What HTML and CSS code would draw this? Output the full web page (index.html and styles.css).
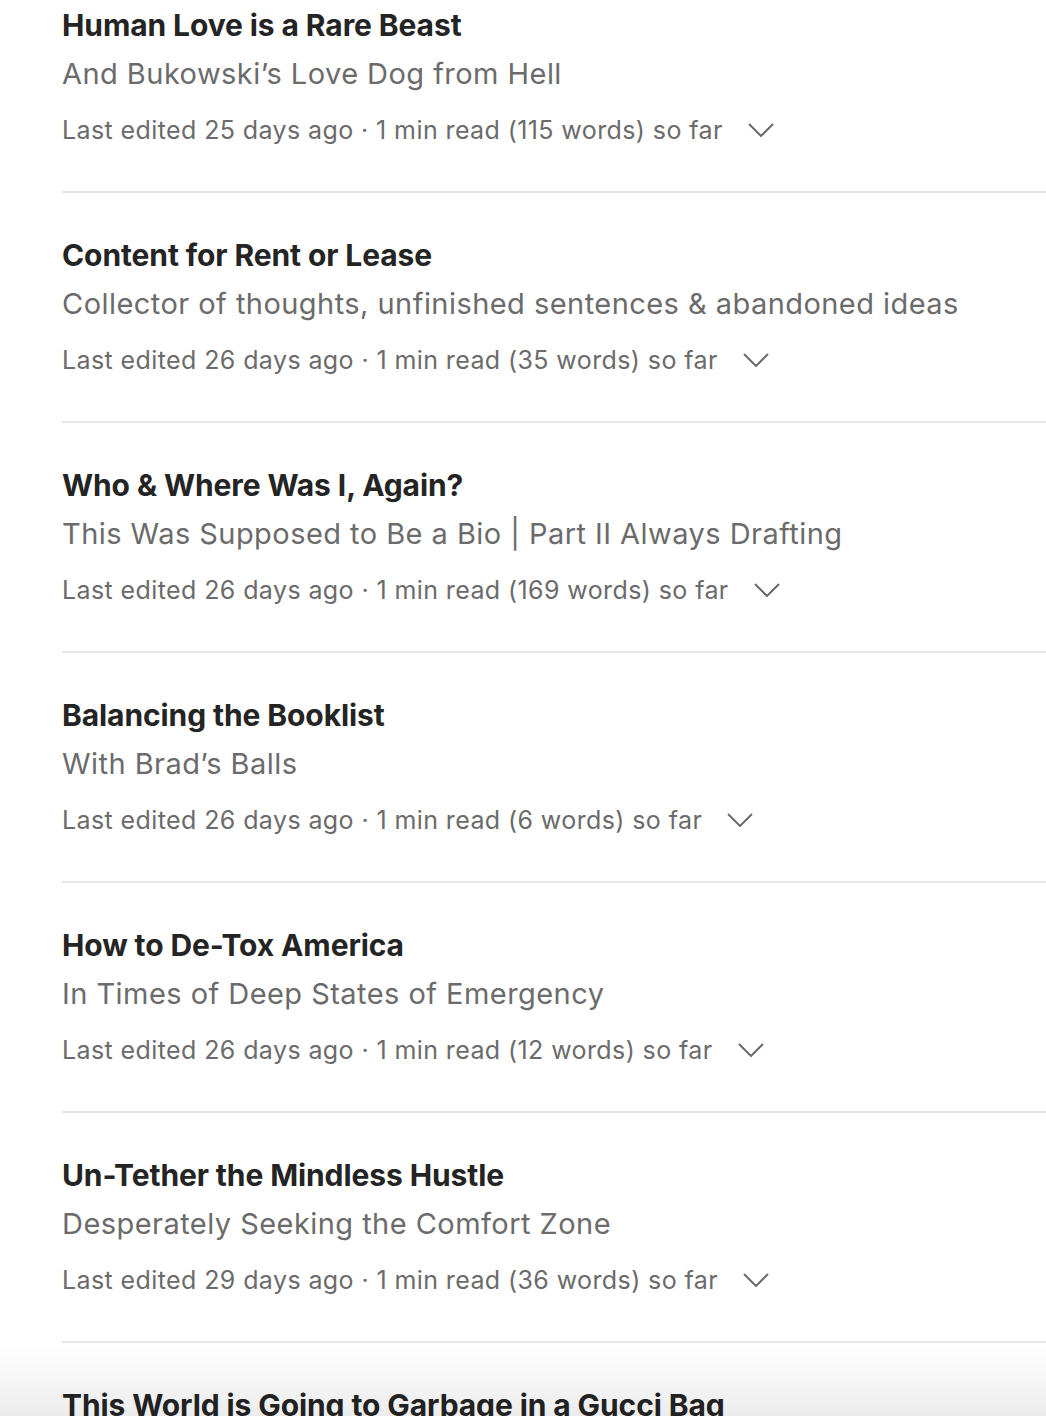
FILE: index.html
```html
<!DOCTYPE html>
<html lang="en">
<head>
<meta charset="utf-8">
<title>Drafts</title>
<link rel="stylesheet" href="styles.css">
</head>
<body>
<main class="list">
  <article class="item">
    <h2 class="title">Human Love is a Rare Beast</h2>
    <p class="subtitle">And Bukowski’s Love Dog from Hell</p>
    <div class="meta"><span>Last edited 25 days ago · 1 min read (115 words) so far</span><svg class="chev" viewBox="0 0 26 14"><path d="M1 1 L13 13 L25 1"/></svg></div>
  </article>
  <article class="item">
    <h2 class="title">Content for Rent or Lease</h2>
    <p class="subtitle">Collector of thoughts, unfinished sentences &amp; abandoned ideas</p>
    <div class="meta"><span>Last edited 26 days ago · 1 min read (35 words) so far</span><svg class="chev" viewBox="0 0 26 14"><path d="M1 1 L13 13 L25 1"/></svg></div>
  </article>
  <article class="item">
    <h2 class="title">Who &amp; Where Was I, Again?</h2>
    <p class="subtitle">This Was Supposed to Be a Bio | Part II Always Drafting</p>
    <div class="meta"><span>Last edited 26 days ago · 1 min read (169 words) so far</span><svg class="chev" viewBox="0 0 26 14"><path d="M1 1 L13 13 L25 1"/></svg></div>
  </article>
  <article class="item">
    <h2 class="title">Balancing the Booklist</h2>
    <p class="subtitle">With Brad’s Balls</p>
    <div class="meta"><span>Last edited 26 days ago · 1 min read (6 words) so far</span><svg class="chev" viewBox="0 0 26 14"><path d="M1 1 L13 13 L25 1"/></svg></div>
  </article>
  <article class="item">
    <h2 class="title">How to De-Tox America</h2>
    <p class="subtitle">In Times of Deep States of Emergency</p>
    <div class="meta"><span>Last edited 26 days ago · 1 min read (12 words) so far</span><svg class="chev" viewBox="0 0 26 14"><path d="M1 1 L13 13 L25 1"/></svg></div>
  </article>
  <article class="item">
    <h2 class="title">Un-Tether the Mindless Hustle</h2>
    <p class="subtitle">Desperately Seeking the Comfort Zone</p>
    <div class="meta"><span>Last edited 29 days ago · 1 min read (36 words) so far</span><svg class="chev" viewBox="0 0 26 14"><path d="M1 1 L13 13 L25 1"/></svg></div>
  </article>
  <article class="item">
    <h2 class="title">This World is Going to Garbage in a Gucci Bag</h2>
  </article>
</main>
<div class="fade"></div>
</body>
</html>
```
FILE: styles.css
```css
html, body {
  margin: 0;
  padding: 0;
  background: #ffffff;
  overflow: hidden;
}
body {
  font-family: Inter, "Noto Sans", "Liberation Sans", sans-serif;
  height: 1416px;
}
.list {
  margin-top: -37px;
  padding-left: 62px;
}
.item {
  padding: 44px 0 45px;
  border-bottom: 2px solid #e6e6e6;
}
.title {
  margin: 0;
  font-size: 30px;
  line-height: 36px;
  font-weight: 700;
  color: #242424;
  letter-spacing: -0.1px;
}
.subtitle {
  margin: 11px 0 0;
  font-size: 29px;
  line-height: 40px;
  font-weight: 400;
  color: #6b6b6b;
  letter-spacing: 0.45px;
}
.meta {
  margin-top: 20px;
  display: flex;
  align-items: center;
  gap: 25px;
  font-size: 25px;
  line-height: 32px;
  color: #6b6b6b;
  letter-spacing: 0.4px;
}
.chev {
  width: 26px;
  height: 14px;
  fill: none;
  stroke: #6b6b6b;
  stroke-width: 2;
}
.fade {
  position: fixed;
  left: 0;
  right: 0;
  bottom: 0;
  height: 72px;
  background: linear-gradient(to bottom, rgba(0,0,0,0), rgba(0,0,0,0.075));
  pointer-events: none;
}
```
